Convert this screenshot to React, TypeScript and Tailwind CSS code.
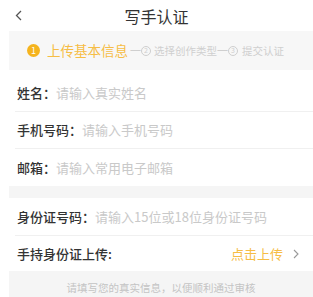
import React from "react";

const font = { fontFamily: '"Noto Sans CJK SC", "Noto Sans", sans-serif' };

function Row({ label, placeholder, last }: { label: string; placeholder: string; last?: boolean }) {
  return (
    <div className={`ml-[6px] flex h-[37px] items-center pl-[2px] ${last ? "" : "border-b border-[#f0f0f0]"}`}>
      <span className="text-[13px] font-medium text-[#333]">{label}</span>
      <span className="text-[13px] text-[#c9c9c9]">{placeholder}</span>
    </div>
  );
}

export default function App() {
  return (
    <div className="h-[297px] w-[313px] overflow-hidden bg-white" style={font}>
      <div className="relative flex h-[31px] items-center justify-center">
        <svg className="absolute left-[15px] top-[10px]" width="7" height="11" viewBox="0 0 7 11">
          <path d="M6 1 L1.5 5.5 L6 10" fill="none" stroke="#555" strokeWidth="1.3" />
        </svg>
        <span className="text-[16px] text-[#333]">写手认证</span>
      </div>
      <div className="pl-[9px]">
        <div className="flex h-[39px] items-center bg-[#f7f7f7] pl-[18px]">
          <span className="flex h-[13px] w-[13px] items-center justify-center rounded-full bg-[#f5b41e] text-[9px] leading-none text-white">1</span>
          <span className="ml-[7px] text-[13.5px] text-[#f6bd45]">上传基本信息</span>
          <span className="ml-[2px] text-[11px] text-[#cfcfcf]">一</span>
          <span className="flex h-[10px] w-[10px] items-center justify-center rounded-full border border-[#cfcfcf] text-[7px] leading-none text-[#cfcfcf]">2</span>
          <span className="ml-[3px] text-[10.5px] text-[#cfcfcf]">选择创作类型</span>
          <span className="text-[11px] text-[#cfcfcf]">一</span>
          <span className="flex h-[10px] w-[10px] items-center justify-center rounded-full border border-[#cfcfcf] text-[7px] leading-none text-[#cfcfcf]">3</span>
          <span className="ml-[4px] text-[10.5px] text-[#cfcfcf]">提交认证</span>
        </div>
        <div className="pt-[5px]">
          <Row label="姓名：" placeholder="请输入真实姓名" />
          <Row label="手机号码：" placeholder="请输入手机号码" />
          <Row label="邮箱：" placeholder="请输入常用电子邮箱" last />
        </div>
        <div className="h-[12px] bg-[#f5f5f5]" />
        <div className="ml-[6px] flex h-[38px] items-center border-b border-[#f0f0f0] pl-[2px]">
          <span className="text-[13px] font-medium text-[#333]">身份证号码：</span>
          <span className="text-[13px] text-[#c9c9c9]">请输入15位或18位身份证号码</span>
        </div>
        <div className="ml-[6px] flex h-[35px] items-center pl-[2px] pr-[14px]">
          <span className="text-[13px] font-medium text-[#333]">手持身份证上传:</span>
          <span className="ml-auto text-[13px] text-[#f6bd45]">点击上传</span>
          <svg className="ml-[10px]" width="6" height="10" viewBox="0 0 6 10">
            <path d="M1 1 L5 5 L1 9" fill="none" stroke="#999" strokeWidth="1.1" />
          </svg>
        </div>
        <div className="flex h-[30px] justify-center bg-[#f5f5f5] pt-[12px]">
          <span className="text-[10.5px] leading-none text-[#c4c4c4]">请填写您的真实信息，以便顺利通过审核</span>
        </div>
      </div>
    </div>
  );
}
